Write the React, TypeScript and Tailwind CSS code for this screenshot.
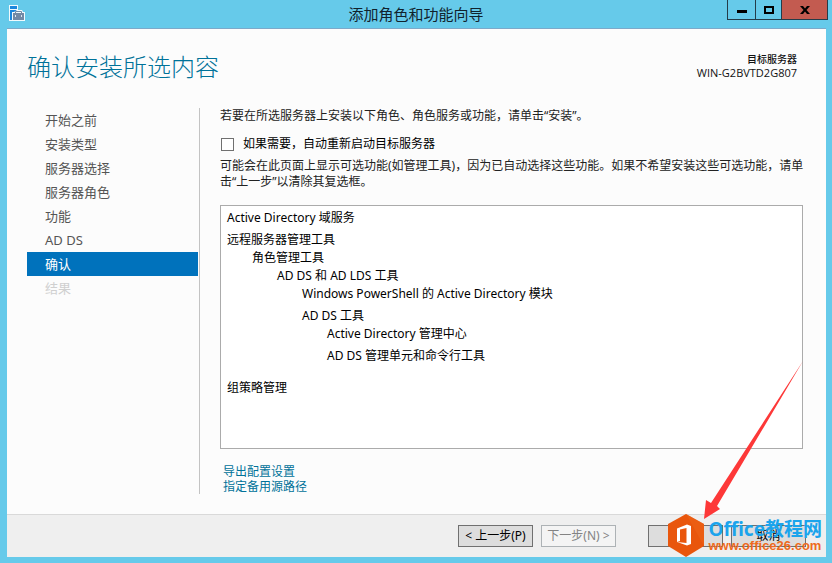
import type { ReactNode } from "react";

const steps = ["开始之前", "安装类型", "服务器选择", "服务器角色", "功能", "AD DS", "确认", "结果"];
const current = 6;

const features = [
  { name: "Active Directory 域服务", className: "" },
  { name: "远程服务器管理工具", className: "mt-1" },
  { name: "角色管理工具", className: "pl-[25px]" },
  { name: "AD DS 和 AD LDS 工具", className: "pl-[50px]" },
  { name: "Windows PowerShell 的 Active Directory 模块", className: "pl-[75px]" },
  { name: "AD DS 工具", className: "mt-1 pl-[75px]" },
  { name: "Active Directory 管理中心", className: "pl-[100px]" },
  { name: "AD DS 管理单元和命令行工具", className: "mt-1 pl-[100px]" },
  { name: "组策略管理", className: "mt-3.5" },
];

const ServerIcon = () => (
  <svg width="16" height="16" viewBox="0 0 16 16" aria-hidden="true">
    <path d="M0 0h9v5h4l1 2h2v9H0z" fill="#f1fafd" />
    <path d="M1 1h7v3H1z" fill="#1b87dc" />
    <path d="M1 5h7L5 7H3v8H1z" fill="#1b87dc" />
    <path d="M4 8h11v7H4z" fill="#7289a5" />
    <path d="M6.500 8V6.500h6V8" fill="none" stroke="#7289a5" />
    <path d="M6 10h1v1h5v-1h1v2h-1v-1H7v1H6z" fill="#dfe8f0" />
  </svg>
);

const TitleBar = () => (
  <header className="relative flex h-7 items-center justify-center">
    <div className="absolute left-[9px] top-[5px]">
      <ServerIcon />
    </div>
    <h1 className="text-[15px] leading-5 text-[#10222c]">添加角色和功能向导</h1>
    <div className="absolute right-1 top-0 flex h-5 border-x border-b border-[#243c49]">
      <button aria-label="最小化" className="flex w-[27px] items-center justify-center">
        <svg width="10" height="10" viewBox="0 0 10 10">
          <path d="M0 5h10v3H0z" />
        </svg>
      </button>
      <button aria-label="最大化" className="flex w-[26px] items-center justify-center border-l border-[#243c49]">
        <svg width="10" height="8" viewBox="0 0 10 8">
          <path d="M1 1h8v6H1z" fill="none" stroke="#000" strokeWidth="2" />
        </svg>
      </button>
      <button
        aria-label="关闭"
        className="flex w-[46px] items-center justify-center border-l border-[#243c49] bg-[#c35b50]"
      >
        <svg width="10" height="8" viewBox="0 0 10 8">
          <path d="M0 0h3l2 2.500L7 0h3L6.500 4 10 8H7L5 5.500 3 8H0l3.500-4z" />
        </svg>
      </button>
    </div>
  </header>
);

const WizardButton = ({ children, disabled = false }: { children: ReactNode; disabled?: boolean }) => (
  <button
    disabled={disabled}
    className="flex h-[22px] w-[75px] items-center justify-center whitespace-nowrap border border-[#707070] bg-[#dddddd] text-xs text-black disabled:border-[#adb2b5] disabled:bg-[#f4f4f4] disabled:text-[#838383]"
  >
    {children}
  </button>
);

const Watermark = () => (
  <div className="pointer-events-none absolute bottom-1.5 right-2.5 flex items-center gap-1">
    <svg width="36" height="43" viewBox="0 0 36 43" aria-hidden="true">
      <path d="M18 0l18 10v22L18 43 0 32V10z" fill="#e9560c" />
      <path d="M18 0l18 10v22l-9-16z" fill="#ee6418" opacity=".5" />
      <path d="M9 14.500l10-4 4 1.500v18l-4 1.500L9 28l9.500 1V14L12 15.500V27l-3 1z" fill="#fff" />
    </svg>
    <div className="whitespace-nowrap font-bold">
      <p className="text-[19px] leading-5 text-[#1ba4ec]">Office教程网</p>
      <p className="font-['Liberation_Sans',sans-serif] text-[13px] leading-3.5 text-[#ee6a20]">www.office26.com</p>
    </div>
  </div>
);

const Arrow = () => (
  <svg
    width="99"
    height="158"
    viewBox="704 361 99 158"
    aria-hidden="true"
    className="pointer-events-none absolute bottom-11 right-[29px]"
  >
    <path d="M704 519l2-19 5 3 92-142-86 145 3 3z" fill="#fd3838" />
  </svg>
);

const App = () => {
  return (
    <div className="relative flex min-h-screen flex-col bg-[#66caea] pb-1.5 pl-[7px] pr-1.5 font-['Noto_Sans','Noto_Sans_CJK_SC',sans-serif] text-xs">
      <div className="-ml-[7px] -mr-1.5">
        <TitleBar />
      </div>

      <div className="flex flex-1 flex-col border-t border-[#7da9c9] bg-[#fcfcfc]">
        <div className="flex items-start justify-between pb-1 pl-5 pr-[29px] pt-5">
          <h2 className="text-[24px] font-light leading-9 text-[#007299]">确认安装所选内容</h2>
          <div className="pt-1 text-right leading-[13px] text-[#111]">
            <p className="text-[10px] font-medium">目标服务器</p>
            <p className="font-['Open_Sans',sans-serif] text-[11px]">WIN-G2BVTD2G807</p>
          </div>
        </div>

        <div className="flex flex-1 pb-5 pl-5 pr-[21px] pt-[19px]">
          <nav className="w-[173px] shrink-0 border-r border-[#c3c3c3] pr-px">
            <ol>
              {steps.map((step, i) => (
                <li key={step}>
                  <a
                    href="#"
                    aria-current={i === current ? "step" : undefined}
                    className={
                      i === current
                        ? "block bg-[#0072bc] pl-[18px] text-[13px] leading-6 text-white"
                        : i > current
                          ? "block pl-[18px] text-[13px] leading-6 text-[#d0d0d0]"
                          : "block pl-[18px] text-[13px] leading-6 text-[#555]"
                    }
                  >
                    {step}
                  </a>
                </li>
              ))}
            </ol>
          </nav>

          <main className="flex min-w-0 flex-1 flex-col pl-5 text-[#222]">
            <p className="leading-4">若要在所选服务器上安装以下角色、角色服务或功能，请单击“安装”。</p>
            <label className="mt-3 flex items-center gap-[9px] pl-px leading-4 text-black">
              <input type="checkbox" className="size-[13px] appearance-none border border-[#707070] bg-white" />
              如果需要，自动重新启动目标服务器
            </label>
            <p className="mt-1.5 leading-4">
              可能会在此页面上显示可选功能(如管理工具)，因为已自动选择这些功能。如果不希望安装这些可选功能，请单击“上一步”以清除其复选框。
            </p>

            <ul className="mr-0.5 mt-[15px] flex-1 border border-[#ababab] bg-white px-1.5 pt-[3px] text-black">
              {features.map(({ name, className }) => (
                <li key={name} className={className}>
                  <span className="block leading-[18px]">{name}</span>
                </li>
              ))}
            </ul>

            <div className="flex flex-col items-start pl-[3px] pt-[15px] leading-[15px] text-[#007299]">
              <a href="#">导出配置设置</a>
              <a href="#">指定备用源路径</a>
            </div>
          </main>
        </div>

        <footer className="flex h-[43px] items-center justify-end gap-2 border-t border-[#d9d9d9] bg-[#efefef] pr-5">
          <WizardButton>&lt; 上一步(P)</WizardButton>
          <WizardButton disabled>下一步(N) &gt;</WizardButton>
          <div className="ml-6 flex gap-2">
            <WizardButton>安装(I)</WizardButton>
            <WizardButton>取消</WizardButton>
          </div>
        </footer>
      </div>

      <Arrow />
      <Watermark />
    </div>
  );
};

export default App;
